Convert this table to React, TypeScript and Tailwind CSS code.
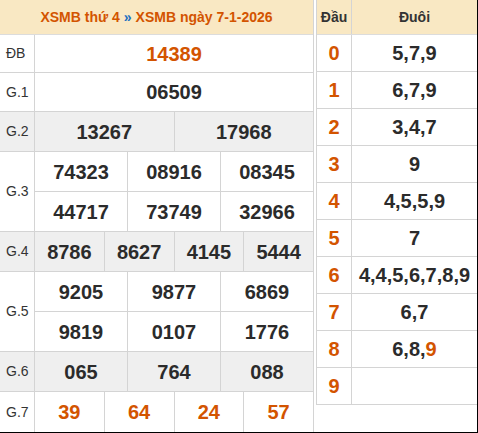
import React from "react"

const font = { fontFamily: '"Liberation Sans", Arial, sans-serif' }

type Row = { label: string; h: string; gray?: boolean; red?: boolean; lines: string[][] }

const rows: Row[] = [
  { label: "ĐB", h: "h-[38px]", red: true, lines: [["14389"]] },
  { label: "G.1", h: "h-[39px]", lines: [["06509"]] },
  { label: "G.2", h: "h-[40px]", gray: true, lines: [["13267", "17968"]] },
  { label: "G.3", h: "h-[80px]", lines: [["74323", "08916", "08345"], ["44717", "73749", "32966"]] },
  { label: "G.4", h: "h-[40px]", gray: true, lines: [["8786", "8627", "4145", "5444"]] },
  { label: "G.5", h: "h-[80px]", lines: [["9205", "9877", "6869"], ["9819", "0107", "1776"]] },
  { label: "G.6", h: "h-[40px]", gray: true, lines: [["065", "764", "088"]] },
  { label: "G.7", h: "h-[40px]", red: true, lines: [["39", "64", "24", "57"]] },
]

const loto = [
  ["0", "5,7,9"],
  ["1", "6,7,9"],
  ["2", "3,4,7"],
  ["3", "9"],
  ["4", "4,5,5,9"],
  ["5", "7"],
  ["6", "4,4,5,6,7,8,9"],
  ["7", "6,7"],
  ["8", "6,8,9"],
  ["9", ""],
]

function Results() {
  return (
    <div className="w-[314px] h-full border-r border-[#d4d4d4] flex flex-col">
      <div className="h-[35px] shrink-0 bg-[#f9e8c3] border-b border-[#dcdcdc] flex items-center justify-center text-[14px] font-bold text-[#d35400]">
        XSMB thứ 4 <span className="text-[#1e6fc0] mx-[4px]">»</span> XSMB ngày 7-1-2026
      </div>
      {rows.map((r) => (
        <div key={r.label} className={`${r.h} shrink-0 flex border-b border-[#d4d4d4] last:border-b-0 ${r.gray ? "bg-[#efefef]" : "bg-white"}`}>
          <div className="w-[35px] shrink-0 border-r border-[#d4d4d4] flex items-center pl-[6px] text-[14px] text-[#333]">
            {r.label}
          </div>
          <div className="flex-1 flex flex-col">
            {r.lines.map((line, i) => (
              <div key={i} className={`flex-1 flex ${i > 0 ? "border-t border-[#d4d4d4]" : ""}`}>
                {line.map((n, j) => (
                  <div
                    key={j}
                    className={`flex-1 flex items-center justify-center text-[20px] font-bold ${j > 0 ? "border-l border-[#d4d4d4]" : ""} ${r.red ? "text-[#d35400]" : "text-[#2b2b2b]"}`}
                  >
                    {n}
                  </div>
                ))}
              </div>
            ))}
          </div>
        </div>
      ))}
    </div>
  )
}

function Loto() {
  return (
    <div className="w-[161px] ml-[2px] self-start border-l border-[#d4d4d4]">
      <div className="h-[35px] flex bg-[#f9e8c3] border-b border-[#dcdcdc] text-[14px] font-bold text-[#333]">
        <div className="w-[35px] border-r border-[#d4d4d4] flex items-center justify-center">Đầu</div>
        <div className="flex-1 flex items-center justify-center">Đuôi</div>
      </div>
      {loto.map(([d, t]) => (
        <div key={d} className="h-[37px] flex border-b border-[#d4d4d4] text-[20px] font-bold">
          <div className="w-[35px] border-r border-[#d4d4d4] flex items-center justify-center text-[#d35400]">{d}</div>
          <div className="flex-1 flex items-center justify-center text-[#2b2b2b]">
            {d === "8" ? (
              <>
                6,8,<span className="text-[#d35400]">9</span>
              </>
            ) : (
              t
            )}
          </div>
        </div>
      ))}
    </div>
  )
}

export default function App() {
  return (
    <div className="w-[478px] h-[433px] bg-white border-r border-b border-black flex" style={font}>
      <Results />
      <Loto />
    </div>
  )
}
